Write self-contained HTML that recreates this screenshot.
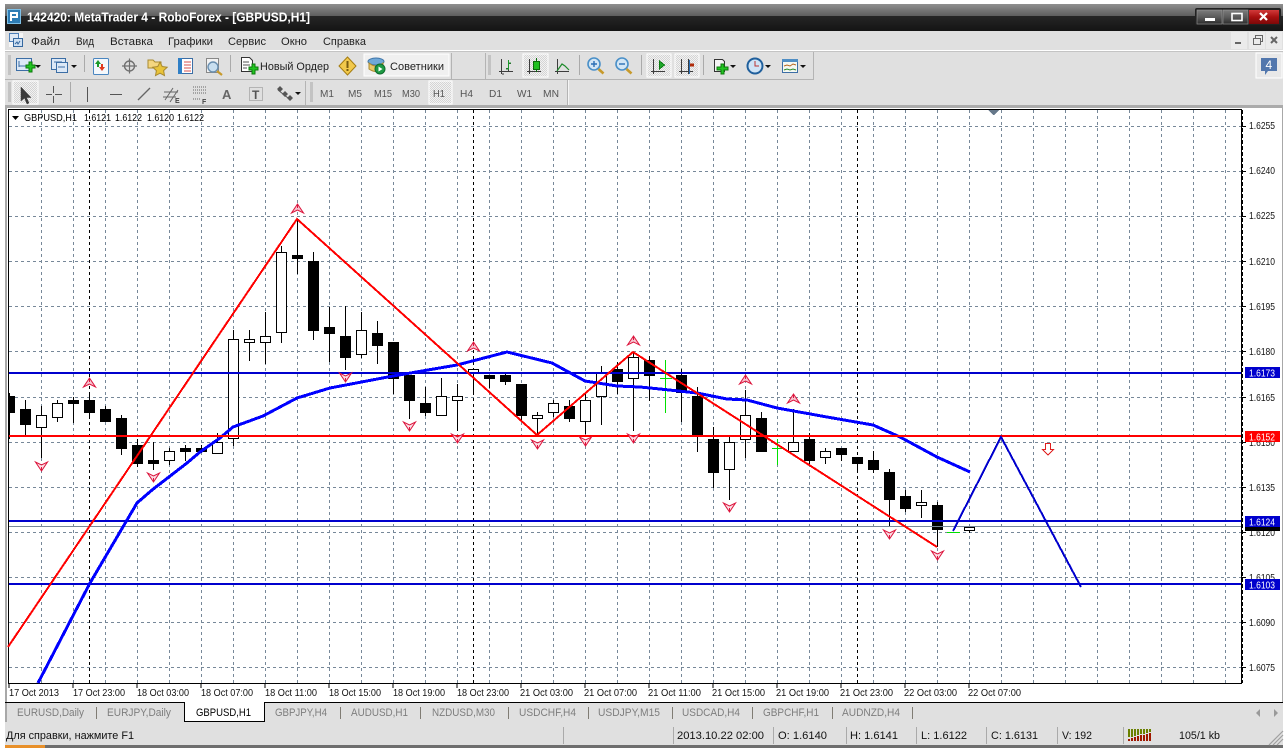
<!DOCTYPE html>
<html><head><meta charset="utf-8"><title>MetaTrader 4</title>
<style>
html,body{margin:0;padding:0;background:#fff;overflow:hidden}
svg{display:block;font-family:"Liberation Sans","Noto Sans CJK SC",sans-serif}
.c{shape-rendering:crispEdges}
.m text{font-size:11px;fill:#222}
.g text{font-size:10.5px;fill:#555}
.t text{font-size:11px;fill:#7d7d7d}
.s text{font-size:11px;fill:#111}
.a text{font-size:10.5px;fill:#111}
.l text{font-size:10.5px;fill:#fff}
</style></head><body>
<svg width="1288" height="748" viewBox="0 0 1288 748" xmlns="http://www.w3.org/2000/svg">
<defs>
<linearGradient id="tb" x1="0" y1="0" x2="0" y2="1"><stop offset="0" stop-color="#8f8f8f"/><stop offset="1" stop-color="#5e5e5e"/></linearGradient>
<linearGradient id="td" x1="0" y1="0" x2="0" y2="1"><stop offset="0" stop-color="#262626"/><stop offset="1" stop-color="#141414"/></linearGradient>
<linearGradient id="bt" x1="0" y1="0" x2="0" y2="1"><stop offset="0" stop-color="#7c7c7c"/><stop offset=".5" stop-color="#5b5b5b"/><stop offset="1" stop-color="#2c2c2c"/></linearGradient>
<linearGradient id="rd" x1="0" y1="0" x2="0" y2="1"><stop offset="0" stop-color="#d23a3a"/><stop offset=".5" stop-color="#a81010"/><stop offset="1" stop-color="#7c0808"/></linearGradient>
<pattern id="ck" width="2" height="2" patternUnits="userSpaceOnUse"><rect width="2" height="2" fill="#f2f2f2"/><rect width="1" height="1" fill="#d4d4d4"/><rect x="1" y="1" width="1" height="1" fill="#d4d4d4"/></pattern>
<g id="u"><path d="M0.5-5L-5.5 4L0.5 1L6.5 4Z" fill="#f7c4d0" stroke="#dc143c" stroke-width="1"/><path d="M0.500-4.500V-1" stroke="#dc143c" stroke-width="1"/></g>
<g id="d"><path d="M0.5 5L-5.500-4L0.5-1L6.500-4Z" fill="#fbdde4" stroke="#dc143c" stroke-width="1"/><path d="M0.500 4.500V1" stroke="#dc143c" stroke-width="1"/></g>
<g id="car"><path d="M0 0h6l-3 3z" fill="#111"/></g>
<g id="grp"><path d="M0 0h3M0 2h3M0 4h3M0 6h3M0 8h3M0 10h3M0 12h3M0 14h3M0 16h3M0 18h3" stroke="#a6a6a6" stroke-width="1"/></g>
</defs>

<!-- window chrome -->
<rect x="5" y="4" width="1278" height="12" fill="url(#tb)"/>
<rect x="5" y="16" width="1278" height="15" fill="url(#td)"/>
<rect x="5" y="31" width="1278" height="714" fill="#e0e0e0"/>
<rect x="5" y="50" width="1278" height="1" fill="#fff"/>
<rect x="5" y="51" width="1278" height="1" fill="#c4c4c4"/>

<!-- logo -->
<rect x="7" y="9" width="14" height="15" fill="#2e7cb4"/>
<rect x="7.5" y="9.5" width="13" height="14" fill="none" stroke="#7fc0e6"/>
<path d="M10 12h8v6h-6v3h-2zM12 14v2h4v-2z" fill="#fff" fill-rule="evenodd"/>
<text x="27" y="21.5" font-size="12.5" font-weight="bold" fill="#fff" textLength="283" lengthAdjust="spacingAndGlyphs">142420: MetaTrader 4 - RoboForex - [GBPUSD,H1]</text>

<!-- window buttons -->
<rect x="1195" y="8" width="86" height="17" rx="2" fill="#222"/>
<rect x="1197" y="10" width="25" height="14" fill="url(#bt)" stroke="#999" stroke-width=".6"/>
<rect x="1223" y="10" width="25" height="14" fill="url(#bt)" stroke="#999" stroke-width=".6"/>
<rect x="1249" y="10" width="30" height="14" fill="url(#rd)"/>
<rect x="1205" y="18" width="10" height="3" fill="#fff"/>
<rect x="1232" y="13.5" width="10" height="7" fill="none" stroke="#fff" stroke-width="1.6"/>
<path d="M1260 13l7 7M1267 13l-7 7" stroke="#fff" stroke-width="2.2"/>

<!-- menu -->
<rect x="9" y="33" width="14" height="14" fill="#f5f5f5"/>
<rect x="9.5" y="33.5" width="9" height="8" fill="#dfe9f5" stroke="#4d7fb8"/>
<rect x="13.5" y="38.5" width="9" height="8" fill="#cfe0f2" stroke="#35689f"/>
<path d="M15 44l2-2 1 2 2-3" stroke="#35689f" fill="none"/>
<g class="m">
<text x="31" y="45" textLength="29" lengthAdjust="spacingAndGlyphs">Файл</text>
<text x="76" y="45" textLength="18" lengthAdjust="spacingAndGlyphs">Вид</text>
<text x="110" y="45" textLength="43" lengthAdjust="spacingAndGlyphs">Вставка</text>
<text x="168" y="45" textLength="45" lengthAdjust="spacingAndGlyphs">Графики</text>
<text x="228" y="45" textLength="38" lengthAdjust="spacingAndGlyphs">Сервис</text>
<text x="281" y="45" textLength="26" lengthAdjust="spacingAndGlyphs">Окно</text>
<text x="323" y="45" textLength="43" lengthAdjust="spacingAndGlyphs">Справка</text>
</g>
<g class="c">
<rect x="1231" y="32" width="16" height="17" fill="#ebebeb"/><rect x="1249" y="32" width="16" height="17" fill="#ebebeb"/><rect x="1266" y="32" width="16" height="17" fill="#ebebeb"/>
<rect x="1235" y="42" width="6" height="2" fill="#666"/>
<path d="M1253.500 38.500h7v6h-7zM1255.500 38v-2.500h7v6h-2" fill="none" stroke="#666"/>
</g>
<path d="M1271 37l6 6M1277 37l-6 6" stroke="#666" stroke-width="2"/>

<!-- toolbars frame -->
<g class="c">
<rect x="5" y="79" width="808" height="1" fill="#b4b4b4"/>
<rect x="813" y="52" width="1" height="28" fill="#b4b4b4"/>
<rect x="5" y="105" width="1278" height="3" fill="#ababab"/>
<rect x="567" y="80" width="1" height="25" fill="#b4b4b4"/><rect x="568" y="80" width="1" height="25" fill="#f5f5f5"/>
<rect x="451" y="53" width="1" height="26" fill="#b4b4b4"/><rect x="485" y="53" width="1" height="26" fill="#b4b4b4"/>
<rect x="305" y="81" width="1" height="24" fill="#b4b4b4"/>
<rect x="84" y="55" width="1" height="17" fill="#aaa"/><rect x="230" y="55" width="1" height="17" fill="#aaa"/><rect x="70" y="82" width="1" height="20" fill="#aaa"/>
<rect x="579" y="55" width="1" height="20" fill="#aaa"/><rect x="641" y="55" width="1" height="20" fill="#aaa"/><rect x="703" y="55" width="1" height="20" fill="#aaa"/>
<!-- pressed buttons -->
<rect x="364" y="54" width="85" height="22" fill="#f0f0f0" stroke="#fff"/>
<rect x="523" y="54" width="25" height="23" fill="url(#ck)" stroke="#fff"/>
<rect x="647" y="54" width="24" height="23" fill="url(#ck)" stroke="#fff"/>
<rect x="675" y="54" width="24" height="23" fill="url(#ck)" stroke="#fff"/>
<rect x="13" y="81" width="25" height="23" fill="url(#ck)" stroke="#fff"/>
<rect x="429" y="81" width="23" height="23" fill="url(#ck)" stroke="#fff"/>
<rect x="1256" y="53" width="26" height="25" fill="#e8e8e8" stroke="#fff"/>
</g>
<g class="c"><use href="#grp" x="8" y="56"/><use href="#grp" x="8" y="83"/><use href="#grp" x="310" y="83"/><use href="#grp" x="488" y="56"/></g>

<!-- toolbar 1 icons -->
<rect x="16.500" y="58.500" width="15" height="12" fill="#dce8f6" stroke="#3c6ea5"/>
<path d="M19 61v6M19 66h8" stroke="#3c6ea5" fill="none"/>
<path d="M26 62h3v-3h0h3v3h3v3h-3v4h-3v-4h-3z" fill="#22c422" stroke="#0b7a0b" transform="translate(0 3)"/>
<use href="#car" x="35" y="65"/>
<rect x="51.500" y="58.500" width="14" height="11" fill="#dce8f6" stroke="#3c6ea5"/>
<rect x="56.500" y="62.500" width="11" height="10" fill="#dce8f6" stroke="#3c6ea5"/>
<path d="M54 62h8M58 67h7" stroke="#3c6ea5"/>
<use href="#car" x="71" y="65"/>
<rect x="93.500" y="58.500" width="15" height="16" rx="1" fill="#f4f8fc" stroke="#4a86c0"/>
<path d="M98 60l3 4h-2v3h-2v-3h-2z" fill="#1d9a2a"/><path d="M102 71l3-4h-2v-3h-2v3h-2z" fill="#e03a1e"/>
<circle cx="129.500" cy="66" r="5" fill="none" stroke="#707070" stroke-width="1.4"/>
<path d="M129.500 58.500v15M122 66h15" stroke="#707070" stroke-width="1.2"/>
<path d="M148 60h5l2 2h6v6h-13z" fill="#f4d680" stroke="#a98a30"/>
<path d="M160 62l2.200 4.500 5 .7-3.600 3.400.9 5-4.500-2.400-4.500 2.400.9-5-3.600-3.400 5-.7z" fill="#e8c33a" stroke="#a98a30"/>
<rect x="178.500" y="58.500" width="14" height="15" fill="#fff" stroke="#3c6ea5"/>
<rect x="178" y="58" width="4" height="16" fill="#2f7fc6"/>
<path d="M184 62h7M184 65h7M184 68h7M184 71h7" stroke="#d9534f" stroke-width=".9"/>
<rect x="206.500" y="58.500" width="12" height="14" fill="#f3f3f3" stroke="#888"/>
<circle cx="213" cy="67" r="5" fill="#c9dff0" stroke="#6a8fb0" stroke-width="1.4"/>
<path d="M217 71l5 4" stroke="#c79a2c" stroke-width="2.2"/>
<path d="M241.500 57.500h8l3 3v11h-11z" fill="#fff" stroke="#333"/>
<path d="M243 62h6M243 65h7M243 68h4" stroke="#555"/>
<path d="M249 67h3v-3h3v3h3v3h-3v4h-3v-4h-3z" fill="#22c422" stroke="#0b7a0b"/>
<path d="M347.500 57l8.500 9-8.500 9-8.500-9z" fill="#f2c94c" stroke="#a57d12"/>
<rect x="346.500" y="61" width="2" height="7" fill="#7a5d10"/><rect x="346.500" y="69" width="2" height="2" fill="#7a5d10"/>
<ellipse cx="376" cy="61.500" rx="8" ry="3.500" fill="#6fa8d8" stroke="#3f75a8"/>
<path d="M369 63q7 6 14 0v6q-7 5-14 0z" fill="#e9c766" stroke="#aa8a2e"/>
<circle cx="380" cy="69" r="5" fill="#1e9a44" stroke="#0e6a2c"/><path d="M378.500 66.500l4 2.500-4 2.500z" fill="#fff"/>
<g class="m"><text x="260" y="70" textLength="69" lengthAdjust="spacingAndGlyphs">Новый Ордер</text>
<text x="390" y="70" textLength="54" lengthAdjust="spacingAndGlyphs">Советники</text></g>

<!-- chart-type icons -->
<g class="c" fill="none">
<path d="M501.500 59v15M499 71.500h14M503 73v2M508.500 61v10M506 68.500h3M509 63.500h2" stroke="#3d3d3d"/>
<path d="M508.500 60v9M506 69h3M508 63h3" stroke="#1c9a2a" stroke-width="1.4"/>
<path d="M529.500 59v15M527 71.500h14" stroke="#3d3d3d"/>
<path d="M536.500 58v14" stroke="#0b6b0b"/><rect x="533.500" y="61.500" width="6" height="8" fill="#20c020" stroke="#0b6b0b"/>
<path d="M557.500 59v15M555 71.500h14" stroke="#3d3d3d"/>
<path d="M653.500 59v15M651 71.500h14" stroke="#3d3d3d"/><path d="M659.500 61v8l5-4z" fill="#1ea82a" stroke="#0b7a12"/>
<path d="M681.500 59v15M679 71.500h14M688.500 59v15" stroke="#3d3d3d"/>
<path d="M689.500 60v14" stroke="#2a6fb5"/><path d="M690 65h4" stroke="#b02a0a" stroke-width="3"/>
</g>
<path d="M557 71l5-7 3 2 4 4" fill="none" stroke="#1c8a2a" stroke-width="1.2"/>
<circle cx="594" cy="64" r="6" fill="#d3e6f5" stroke="#4a90c8" stroke-width="1.6"/><path d="M591 64h6M594 61v6" stroke="#2a6fb5" stroke-width="1.4"/><path d="M598.500 69l5 4.500" stroke="#c79a2c" stroke-width="2.600"/>
<circle cx="622" cy="64" r="6" fill="#d3e6f5" stroke="#4a90c8" stroke-width="1.6"/><path d="M619 64h6" stroke="#2a6fb5" stroke-width="1.4"/><path d="M626.500 69l5 4.500" stroke="#c79a2c" stroke-width="2.600"/>
<path d="M714.500 59.500h8l2 2v10h-10z" fill="#f4f4f4" stroke="#333"/>
<path d="M717 67h4v-3h3v3h4v3h-4v4h-3v-4h-4z" fill="#22c422" stroke="#0b7a0b"/>
<use href="#car" x="730" y="65"/>
<circle cx="755" cy="66" r="7.500" fill="#cfe4f6" stroke="#1f5f9c" stroke-width="2"/><path d="M755 61v5h4" stroke="#b33" fill="none"/>
<use href="#car" x="765" y="65"/>
<rect x="782.500" y="59.500" width="15" height="13" fill="#f4f8f2" stroke="#3c6ea5"/><rect x="782" y="59" width="16" height="3" fill="#4f8ec4"/>
<path d="M784 66l3-1 3 1 3-2 3 1" fill="none" stroke="#b5651d"/><path d="M784 70l3-1 3 1 3-1 3 1" fill="none" stroke="#2a8a2a"/>
<use href="#car" x="800" y="65"/>
<!-- notification -->
<path d="M1261 58h16v13h-9l-3 4v-4h-4z" fill="#5277ad"/>
<text x="1265.500" y="69" font-size="12" fill="#fff">4</text>

<!-- toolbar 2 icons -->
<path d="M21 87v14l3.500-3 2.500 6 2-1-2.500-5.500H31z" fill="#3a3a3a" stroke="#3a3a3a" stroke-width=".5"/>
<path d="M53.500 86v7M53.500 96v7M46 94.500h6M55 94.500h7" stroke="#555" class="c"/>
<path d="M87.500 87v15M110 94.500h12" stroke="#555" class="c"/>
<path d="M138 100l12-12" stroke="#666" stroke-width="1.300"/>
<path d="M165 100l8-12M170 102l8-12M164 92l14 0M163 97l13 0" stroke="#666"/><text x="175" y="103" font-size="7" font-weight="bold" fill="#444">E</text>
<path d="M193 87h14M193 90h14M193 93h14M193 99h8" stroke="#666" stroke-dasharray="1 1" class="c"/><text x="202" y="104" font-size="7" font-weight="bold" fill="#444">F</text>
<text x="222" y="99" font-size="13" font-weight="bold" fill="#666">A</text>
<rect x="249.500" y="87.500" width="13" height="13" fill="none" stroke="#888" stroke-dasharray="1 1" class="c"/><text x="252" y="99" font-size="12" font-weight="bold" fill="#555">T</text>
<path d="M280 86l3 3-3 3-3-3zM285 91l3 3-3 3-3-3zM290 95l3 3-3 3-3-3z" fill="#555"/><path d="M278 90l10 8" stroke="#555"/>
<use href="#car" x="295" y="92"/>
<g class="g">
<text x="320" y="97" textLength="14" lengthAdjust="spacingAndGlyphs">M1</text>
<text x="348" y="97" textLength="14" lengthAdjust="spacingAndGlyphs">M5</text>
<text x="374" y="97" textLength="18" lengthAdjust="spacingAndGlyphs">M15</text>
<text x="402" y="97" textLength="18" lengthAdjust="spacingAndGlyphs">M30</text>
<text x="433" y="97" textLength="12" lengthAdjust="spacingAndGlyphs">H1</text>
<text x="460" y="97" textLength="13" lengthAdjust="spacingAndGlyphs">H4</text>
<text x="489" y="97" textLength="13" lengthAdjust="spacingAndGlyphs">D1</text>
<text x="517" y="97" textLength="15" lengthAdjust="spacingAndGlyphs">W1</text>
<text x="543" y="97" textLength="16" lengthAdjust="spacingAndGlyphs">MN</text>
</g>

<!-- chart window -->
<g class="c">
<rect x="5" y="108" width="2" height="594" fill="#a8a8a8"/>
<rect x="7" y="108" width="1275" height="595" fill="#fff"/>
<rect x="1282" y="108" width="1" height="595" fill="#a8a8a8"/>
<!-- grid -->
<path fill="none" stroke="#778899" stroke-dasharray="3 3" d="M41.500 110V683M73.500 110V683M105.500 110V683M137.500 110V683M169.500 110V683M201.500 110V683M233.500 110V683M265.500 110V683M297.500 110V683M329.500 110V683M361.500 110V683M393.500 110V683M425.500 110V683M457.500 110V683M489.500 110V683M521.500 110V683M553.500 110V683M585.500 110V683M617.500 110V683M649.500 110V683M681.500 110V683M713.500 110V683M745.500 110V683M777.500 110V683M809.500 110V683M841.500 110V683M873.500 110V683M905.500 110V683M937.500 110V683M969.500 110V683M1001.500 110V683M1033.500 110V683M1065.500 110V683M1097.500 110V683M1129.500 110V683M1161.500 110V683M1193.500 110V683M1225.500 110V683"/>
<path fill="none" stroke="#778899" stroke-dasharray="3 3" d="M9 126.500H1241M9 171.500H1241M9 216.500H1241M9 261.500H1241M9 306.500H1241M9 351.500H1241M9 397.500H1241M9 442.500H1241M9 487.500H1241M9 532.500H1241M9 577.500H1241M9 622.500H1241M9 667.500H1241"/>
<path fill="none" stroke="#000" stroke-dasharray="3 3" d="M89.500 110V683M473.500 110V683M857.500 110V683"/>
<!-- frame -->
<rect x="8" y="109" width="1234" height="1" fill="#000"/>
<rect x="8" y="683" width="1234" height="1" fill="#000"/>
<rect x="8" y="109" width="1" height="575" fill="#000"/>
<rect x="1241" y="109" width="1" height="575" fill="#000"/>
<path d="M1242.500 110V683" stroke="#000" stroke-dasharray="4 2"/>
<path d="M9 684v4M73 684v4M137 684v4M201 684v4M265 684v4M329 684v4M393 684v4M457 684v4M521 684v4M585 684v4M649 684v4M713 684v4M777 684v4M841 684v4M905 684v4M969 684v4" stroke="#000"/>
<path d="M1242 126.500h4M1242 171.500h4M1242 216.500h4M1242 261.500h4M1242 306.500h4M1242 351.500h4M1242 397.500h4M1242 442.500h4M1242 487.500h4M1242 532.500h4M1242 577.500h4M1242 622.500h4M1242 667.500h4" stroke="#000"/>
<path d="M988 110h11l-5 5h-1z" fill="#66788a"/>

<!-- wicks -->
<path fill="none" stroke="#000" d="M9.500 393V439M25.500 400V435M41.500 406V458M57.500 400V422M73.500 397V423M89.500 392V418M105.500 406V422M121.500 415V455M137.500 439V467M153.500 442V470M169.500 448V465M185.500 445V461M201.500 445V453M217.500 433V454M233.500 330V446M249.500 330V361M265.500 312V364M281.500 246V343M297.500 220V274M313.500 252V340M329.500 307V362M345.500 306V370M361.500 312V358M377.500 321V364M393.500 342V394M409.500 375V419M425.500 387V416M441.500 378V416M457.500 384V431M473.500 369V394M489.500 375V388M505.500 374V385M521.500 384V420M537.500 412V435M553.500 400V417M569.500 400V422M585.500 393V434M601.500 366V425M617.500 362V394M633.500 352V431M649.500 356V401M681.500 369V422M697.500 387V452M713.500 427V488M729.500 437V500M745.500 390V458M761.500 412V452M793.500 409V452M809.500 433V464M825.500 448V464M841.500 448V461M857.500 457V473M873.500 451V473M889.500 469V527M905.500 490V512M921.500 490V518M937.500 502V547M969.500 530V533"/>
<path fill="none" stroke="#00e000" d="M665.500 360V413M660 378.500H672M777.500 439V465M772 448.500H784M947 532.500H960"/>
<!-- black bodies -->
<path fill="#000" d="M9 396h6v17h-6zM20 409h11v16h-11zM68 400h11v4h-11zM84 400h11v13h-11zM100 409h11v13h-11zM116 418h11v31h-11zM132 445h11v19h-11zM148 460h11v4h-11zM180 448h11v4h-11zM196 448h11v4h-11zM292 255h11v4h-11zM308 261h11v70h-11zM324 327h11v7h-11zM340 336h11v22h-11zM372 333h11v13h-11zM388 342h11v37h-11zM404 375h11v26h-11zM420 403h11v10h-11zM484 375h11v4h-11zM500 375h11v7h-11zM516 384h11v32h-11zM564 406h11v13h-11zM612 369h11v13h-11zM644 360h11v16h-11zM676 375h11v18h-11zM692 396h11v39h-11zM708 439h11v34h-11zM756 418h11v34h-11zM804 439h11v22h-11zM836 448h11v7h-11zM852 457h11v7h-11zM868 460h11v10h-11zM884 472h11v28h-11zM900 496h11v13h-11zM932 505h11v25h-11z"/>
<!-- white bodies -->
<path fill="#fff" stroke="#000" d="M36.500 415.500h10v12h-10zM52.500 403.500h10v14h-10zM164.500 451.500h10v9h-10zM212.500 442.500h10v11h-10zM228.500 339.500h10v99h-10zM244.500 339.500h10v3h-10zM260.500 336.500h10v6h-10zM276.500 252.500h10v80h-10zM356.500 330.500h10v24h-10zM436.500 396.500h10v19h-10zM452.500 396.500h10v4h-10zM468.500 369.500h10v3h-10zM532.500 415.500h10v3h-10zM548.500 403.500h10v9h-10zM580.500 400.500h10v21h-10zM596.500 373.500h10v23h-10zM628.500 357.500h10v21h-10zM724.500 442.500h10v27h-10zM740.500 415.500h10v24h-10zM788.500 442.500h10v9h-10zM820.500 451.500h10v6h-10zM916.500 502.500h10v3h-10zM964.500 527.500h10v3h-10z"/>

<!-- horizontal lines -->
<rect x="9" y="372" width="1232" height="2" fill="#0000cd"/>
<rect x="9" y="520" width="1232" height="2" fill="#0000cd"/>
<rect x="9" y="583" width="1232" height="2" fill="#0000cd"/>
<rect x="9" y="526" width="1232" height="1" fill="#778899"/>
<!-- MA -->
<polyline fill="none" stroke="#0000ff" stroke-width="3" points="38,683 90,583 137,503 152,490 187,463 200,452 220,438 233,427 263,416 297,398 330,388 393,376 457,365 507,352 552,363 585,381 617,386 640,387 660,389 697,393 727,399 747,400 777,408 827,417 873,425 900,437 937,457 970,472"/>
<rect x="9" y="435" width="1232" height="2" fill="#ff0000"/>
<!-- zigzag -->
<polyline fill="none" stroke="#ff0000" stroke-width="2" points="8,647 297,219 537,435 633,352 937,547"/>
<!-- drawn wave -->
<polyline fill="none" stroke="#0000cd" stroke-width="2" points="953,531 1001,437 1081,587"/>
</g>
<!-- fractals -->
<use href="#u" x="297" y="209"/><use href="#u" x="89" y="383"/><use href="#u" x="473" y="347"/><use href="#u" x="633" y="341"/><use href="#u" x="745" y="380"/><use href="#u" x="793" y="399"/>
<use href="#d" x="41" y="466"/><use href="#d" x="153" y="477"/><use href="#d" x="345" y="377"/><use href="#d" x="409" y="426"/><use href="#d" x="457" y="438"/><use href="#d" x="537" y="444"/><use href="#d" x="585" y="441"/><use href="#d" x="633" y="438"/><use href="#d" x="729" y="507"/><use href="#d" x="889" y="534"/><use href="#d" x="937" y="555"/>
<path class="c" d="M1045.500 443.500h5v6h3l-5.500 5.500-5.500-5.500h3z" fill="#fff" stroke="#e02020"/>

<!-- chart header -->
<path d="M12 116h7l-3.500 4z" fill="#000"/>
<g font-size="10" fill="#000">
<text x="24" y="121" textLength="53" lengthAdjust="spacingAndGlyphs">GBPUSD,H1</text>
<text x="84" y="121" textLength="27" lengthAdjust="spacingAndGlyphs">1.6121</text>
<text x="115" y="121" textLength="27" lengthAdjust="spacingAndGlyphs">1.6122</text>
<text x="147" y="121" textLength="27" lengthAdjust="spacingAndGlyphs">1.6120</text>
<text x="177" y="121" textLength="27" lengthAdjust="spacingAndGlyphs">1.6122</text>
</g>

<!-- price axis -->
<g class="a">
<text x="1249" y="129" textLength="26" lengthAdjust="spacingAndGlyphs">1.6255</text>
<text x="1249" y="174" textLength="26" lengthAdjust="spacingAndGlyphs">1.6240</text>
<text x="1249" y="219" textLength="26" lengthAdjust="spacingAndGlyphs">1.6225</text>
<text x="1249" y="265" textLength="26" lengthAdjust="spacingAndGlyphs">1.6210</text>
<text x="1249" y="310" textLength="26" lengthAdjust="spacingAndGlyphs">1.6195</text>
<text x="1249" y="355" textLength="26" lengthAdjust="spacingAndGlyphs">1.6180</text>
<text x="1249" y="401" textLength="26" lengthAdjust="spacingAndGlyphs">1.6165</text>
<text x="1249" y="446" textLength="26" lengthAdjust="spacingAndGlyphs">1.6150</text>
<text x="1249" y="491" textLength="26" lengthAdjust="spacingAndGlyphs">1.6135</text>
<text x="1249" y="536" textLength="26" lengthAdjust="spacingAndGlyphs">1.6120</text>
<text x="1249" y="581" textLength="26" lengthAdjust="spacingAndGlyphs">1.6105</text>
<text x="1249" y="626" textLength="26" lengthAdjust="spacingAndGlyphs">1.6090</text>
<text x="1249" y="671" textLength="26" lengthAdjust="spacingAndGlyphs">1.6075</text>
</g>
<g class="c">
<rect x="1245" y="526" width="35" height="5" fill="#000"/>
<rect x="1245" y="367" width="35" height="11" fill="#0000cd"/>
<rect x="1245" y="431" width="35" height="11" fill="#ff0000"/>
<rect x="1245" y="516" width="35" height="11" fill="#0000cd"/>
<rect x="1245" y="579" width="35" height="11" fill="#0000cd"/>
</g>
<g class="l">
<text x="1249" y="376.500" textLength="26" lengthAdjust="spacingAndGlyphs">1.6173</text>
<text x="1249" y="440.500" textLength="26" lengthAdjust="spacingAndGlyphs">1.6152</text>
<text x="1249" y="525.500" textLength="26" lengthAdjust="spacingAndGlyphs">1.6124</text>
<text x="1249" y="588.500" textLength="26" lengthAdjust="spacingAndGlyphs">1.6103</text>
</g>

<!-- time axis -->
<g class="a">
<text x="9" y="696" textLength="50" lengthAdjust="spacingAndGlyphs">17 Oct 2013</text>
<text x="73" y="696" textLength="52" lengthAdjust="spacingAndGlyphs">17 Oct 23:00</text>
<text x="137" y="696" textLength="52" lengthAdjust="spacingAndGlyphs">18 Oct 03:00</text>
<text x="201" y="696" textLength="52" lengthAdjust="spacingAndGlyphs">18 Oct 07:00</text>
<text x="265" y="696" textLength="52" lengthAdjust="spacingAndGlyphs">18 Oct 11:00</text>
<text x="329" y="696" textLength="52" lengthAdjust="spacingAndGlyphs">18 Oct 15:00</text>
<text x="393" y="696" textLength="52" lengthAdjust="spacingAndGlyphs">18 Oct 19:00</text>
<text x="457" y="696" textLength="52" lengthAdjust="spacingAndGlyphs">18 Oct 23:00</text>
<text x="520" y="696" textLength="53" lengthAdjust="spacingAndGlyphs">21 Oct 03:00</text>
<text x="584" y="696" textLength="53" lengthAdjust="spacingAndGlyphs">21 Oct 07:00</text>
<text x="648" y="696" textLength="53" lengthAdjust="spacingAndGlyphs">21 Oct 11:00</text>
<text x="712" y="696" textLength="53" lengthAdjust="spacingAndGlyphs">21 Oct 15:00</text>
<text x="776" y="696" textLength="53" lengthAdjust="spacingAndGlyphs">21 Oct 19:00</text>
<text x="840" y="696" textLength="53" lengthAdjust="spacingAndGlyphs">21 Oct 23:00</text>
<text x="904" y="696" textLength="53" lengthAdjust="spacingAndGlyphs">22 Oct 03:00</text>
<text x="968" y="696" textLength="53" lengthAdjust="spacingAndGlyphs">22 Oct 07:00</text>
</g>

<!-- tabs -->
<g class="c">
<rect x="5" y="702" width="1278" height="1" fill="#000"/>
<rect x="5" y="703" width="2" height="19" fill="#a8a8a8"/>
<rect x="184" y="702" width="81" height="20" fill="#000"/>
<rect x="185" y="702" width="79" height="19" fill="#fff"/>
<path d="M96.500 707v12M340.500 707v12M420.500 707v12M508.500 707v12M588.500 707v12M672.500 707v12M752.500 707v12M832.500 707v12M912.500 707v12" stroke="#807c74"/>
</g>
<g class="t">
<text x="17" y="716" textLength="67" lengthAdjust="spacingAndGlyphs">EURUSD,Daily</text>
<text x="107" y="716" textLength="64" lengthAdjust="spacingAndGlyphs">EURJPY,Daily</text>
<text x="275" y="716" textLength="52" lengthAdjust="spacingAndGlyphs">GBPJPY,H4</text>
<text x="351" y="716" textLength="57" lengthAdjust="spacingAndGlyphs">AUDUSD,H1</text>
<text x="432" y="716" textLength="63" lengthAdjust="spacingAndGlyphs">NZDUSD,M30</text>
<text x="519" y="716" textLength="57" lengthAdjust="spacingAndGlyphs">USDCHF,H4</text>
<text x="598" y="716" textLength="62" lengthAdjust="spacingAndGlyphs">USDJPY,M15</text>
<text x="682" y="716" textLength="58" lengthAdjust="spacingAndGlyphs">USDCAD,H4</text>
<text x="763" y="716" textLength="56" lengthAdjust="spacingAndGlyphs">GBPCHF,H1</text>
<text x="842" y="716" textLength="58" lengthAdjust="spacingAndGlyphs">AUDNZD,H4</text>
</g>
<text x="196" y="716" font-size="11" fill="#000" textLength="55" lengthAdjust="spacingAndGlyphs">GBPUSD,H1</text>
<path d="M1260 709v8l-4-4zM1274 709v8l4-4z" fill="#9a9a9a"/>

<!-- status bar -->
<g class="c">
<path d="M563.500 727v17M673.500 727v17M773.500 727v17M846.500 727v17M916.500 727v17M986.500 727v17M1057.500 727v17M1123.500 727v17" stroke="#aaa"/>
<path d="M1128 729h2v8h-2zM1131 729h2v8h-2zM1134 729h2v7h-2zM1137 729h2v6h-2zM1140 729h2v5h-2zM1143 729h2v5h-2zM1146 729h2v4h-2zM1149 729h2v3h-2z" fill="#6a8000"/>
<path d="M1128 739h2v2h-2zM1131 738h2v3h-2zM1134 737h2v4h-2zM1137 736h2v5h-2zM1140 735h2v6h-2zM1143 735h2v6h-2zM1146 734h2v7h-2zM1149 733h2v8h-2z" fill="#a01800"/>
<rect x="5" y="745" width="1278" height="3" fill="#6e6e6e"/>
<rect x="5" y="745" width="40" height="3" fill="#e8902a"/>
</g>
<path d="M1269 745l14-14M1273 745l10-10M1277 745l6-6" stroke="#a0a0a0" stroke-width="1.2"/>
<g class="s">
<text x="6" y="739" textLength="128" lengthAdjust="spacingAndGlyphs">Для справки, нажмите F1</text>
<text x="677" y="739" textLength="87" lengthAdjust="spacingAndGlyphs">2013.10.22 02:00</text>
<text x="778" y="739" textLength="49" lengthAdjust="spacingAndGlyphs">O: 1.6140</text>
<text x="850" y="739" textLength="48" lengthAdjust="spacingAndGlyphs">H: 1.6141</text>
<text x="921" y="739" textLength="46" lengthAdjust="spacingAndGlyphs">L: 1.6122</text>
<text x="991" y="739" textLength="47" lengthAdjust="spacingAndGlyphs">C: 1.6131</text>
<text x="1062" y="739" textLength="30" lengthAdjust="spacingAndGlyphs">V: 192</text>
<text x="1179" y="739" textLength="41" lengthAdjust="spacingAndGlyphs">105/1 kb</text>
</g>
</svg>
</body></html>
